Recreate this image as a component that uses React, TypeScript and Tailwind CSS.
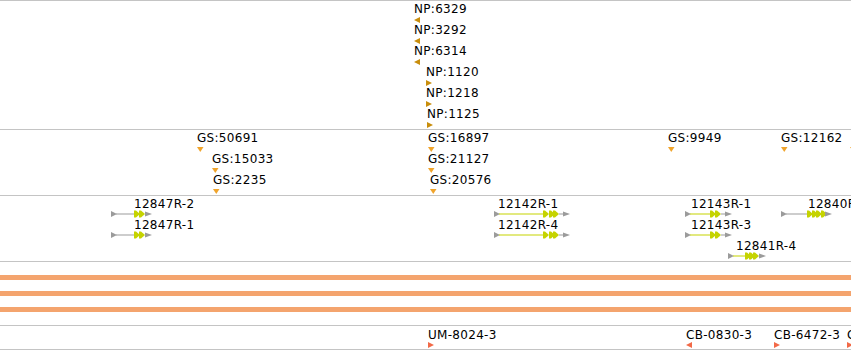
import type { ReactNode } from "react";

type Dir = "left" | "right" | "down";

const NP_COLOR = "#c98e0c";
const GS_COLOR = "#f0a42c";
const UM_COLOR = "#f26a48";
const GRAY = "#9b9b9b";
const LIME = "#c5d300";

const npFeatures = [
  { x: 414, row: 0, text: "NP:6329", dir: "left" as Dir },
  { x: 414, row: 1, text: "NP:3292", dir: "left" as Dir },
  { x: 414, row: 2, text: "NP:6314", dir: "left" as Dir },
  { x: 426, row: 3, text: "NP:1120", dir: "right" as Dir },
  { x: 426, row: 4, text: "NP:1218", dir: "right" as Dir },
  { x: 427, row: 5, text: "NP:1125", dir: "right" as Dir },
];

const gsFeatures = [
  { x: 197, row: 0, text: "GS:50691" },
  { x: 212, row: 1, text: "GS:15033" },
  { x: 213, row: 2, text: "GS:2235" },
  { x: 428, row: 0, text: "GS:16897" },
  { x: 428, row: 1, text: "GS:21127" },
  { x: 430, row: 2, text: "GS:20576" },
  { x: 668, row: 0, text: "GS:9949" },
  { x: 781, row: 0, text: "GS:12162" },
  { x: 850, row: 0, text: "" },
];

const umFeatures = [
  { x: 428, text: "UM-8024-3", dir: "right" as Dir },
  { x: 686, text: "CB-0830-3", dir: "left" as Dir },
  { x: 774, text: "CB-6472-3", dir: "right" as Dir },
  { x: 847, text: "CB-6511-1", dir: "right" as Dir },
];

type Gene = {
  label: string;
  labelX: number;
  row: number;
  start: number;
  lineColor: string;
  arrowStart: number;
  arrows: number[];
  end: number;
};

const genes: Gene[] = [
  { label: "12847R-2", labelX: 134, row: 0, start: 111, lineColor: GRAY, arrowStart: 134, arrows: [134, 139], end: 151 },
  { label: "12847R-1", labelX: 134, row: 1, start: 111, lineColor: GRAY, arrowStart: 134, arrows: [134, 139], end: 151 },
  { label: "12142R-1", labelX: 498, row: 0, start: 494, lineColor: LIME, arrowStart: 543, arrows: [543, 549, 553], end: 569 },
  { label: "12142R-4", labelX: 498, row: 1, start: 494, lineColor: LIME, arrowStart: 543, arrows: [543, 549, 553], end: 569 },
  { label: "12143R-1", labelX: 691, row: 0, start: 685, lineColor: LIME, arrowStart: 710, arrows: [710, 715], end: 731 },
  { label: "12143R-3", labelX: 691, row: 1, start: 685, lineColor: LIME, arrowStart: 710, arrows: [710, 715], end: 731 },
  { label: "12841R-4", labelX: 736, row: 2, start: 728, lineColor: LIME, arrowStart: 745, arrows: [745, 749, 753], end: 765 },
  { label: "12840R-2", labelX: 808, row: 0, start: 781, lineColor: GRAY, arrowStart: 807, arrows: [807, 812, 816, 821], end: 831 },
];

function Marker({ dir, color }: { dir: Dir; color: string }) {
  if (dir === "down") {
    return (
      <svg width="7" height="5" className="block">
        <polygon points="0,0 6.5,0 3.25,5" fill={color} />
      </svg>
    );
  }
  if (dir === "left") {
    return (
      <svg width="6" height="6" className="block">
        <polygon points="6,0 6,6 0,3" fill={color} />
      </svg>
    );
  }
  return (
    <svg width="6" height="6" className="block">
      <polygon points="0,0 6,3 0,6" fill={color} />
    </svg>
  );
}

function Feature({
  x,
  top,
  text,
  dir,
  color,
  gap,
}: {
  x: number;
  top: number;
  text: string;
  dir: Dir;
  color: string;
  gap: string;
}) {
  return (
    <div className="absolute flex flex-col items-start" style={{ left: x, top }}>
      <span className="leading-[12px] h-[12px] whitespace-nowrap">{text}</span>
      <div className={gap}>
        <Marker dir={dir} color={color} />
      </div>
    </div>
  );
}

function GeneGlyph({ gene }: { gene: Gene }) {
  const s = gene.start;
  const w = gene.end - s + 1;
  const lastArrow = gene.arrows[gene.arrows.length - 1] + 6;
  const tipStart = gene.end - 6;
  return (
    <svg width={w} height="8" className="block">
      <polygon points="0,1 6,4 0,7" fill={GRAY} />
      <rect x="5" y="3.5" width={gene.arrowStart - s - 5} height="1" fill={gene.lineColor} />
      {gene.arrows.map((a) => (
        <polygon
          key={a}
          points={`${a - s},0.5 ${a - s + 2},0.5 ${a - s + 6},4 ${a - s + 2},7.5 ${a - s},7.5`}
          fill={LIME}
        />
      ))}
      {tipStart > lastArrow && (
        <rect x={lastArrow - s} y="3.5" width={tipStart - lastArrow} height="1" fill={GRAY} />
      )}
      <polygon points={`${tipStart - s},1.5 ${w},4 ${tipStart - s},6.5`} fill={GRAY} />
    </svg>
  );
}

function Track({ className, children }: { className: string; children?: ReactNode }) {
  return <div className={`relative border-t border-[#c4c4c4] ${className}`}>{children}</div>;
}

export default function App() {
  return (
    <div className="w-[851px] h-[350px] overflow-hidden bg-white text-[12px] tracking-[0.3px] text-black font-['DejaVu_Sans',sans-serif]">
      <Track className="h-[129px]">
        {npFeatures.map((f) => (
          <Feature
            key={f.text}
            x={f.x}
            top={2 + f.row * 21}
            text={f.text}
            dir={f.dir}
            color={NP_COLOR}
            gap="mt-[2px]"
          />
        ))}
      </Track>

      <Track className="h-[66px]">
        {gsFeatures.map((f, i) => (
          <Feature
            key={i}
            x={f.x}
            top={2 + f.row * 21}
            text={f.text}
            dir="down"
            color={GS_COLOR}
            gap="mt-[3px]"
          />
        ))}
      </Track>

      <Track className="h-[66px]">
        {genes.map((g) => (
          <div key={g.label} className="absolute" style={{ left: g.start, top: 2 + g.row * 21 }}>
            <span
              className="block leading-[12px] h-[12px] whitespace-nowrap"
              style={{ marginLeft: g.labelX - g.start }}
            >
              {g.label}
            </span>
            <GeneGlyph gene={g} />
          </div>
        ))}
      </Track>

      <Track className="h-[64px] flex flex-col pt-[13px] gap-[11px]">
        <div className="h-[5px] bg-[#f4a46e]" />
        <div className="h-[5px] bg-[#f4a46e]" />
        <div className="h-[5px] bg-[#f4a46e]" />
      </Track>

      <Track className="h-[24px]">
        {umFeatures.map((f) => (
          <Feature
            key={f.text}
            x={f.x}
            top={3}
            text={f.text}
            dir={f.dir}
            color={UM_COLOR}
            gap="mt-[1px]"
          />
        ))}
      </Track>

      <Track className="h-[1px]" />
    </div>
  );
}
